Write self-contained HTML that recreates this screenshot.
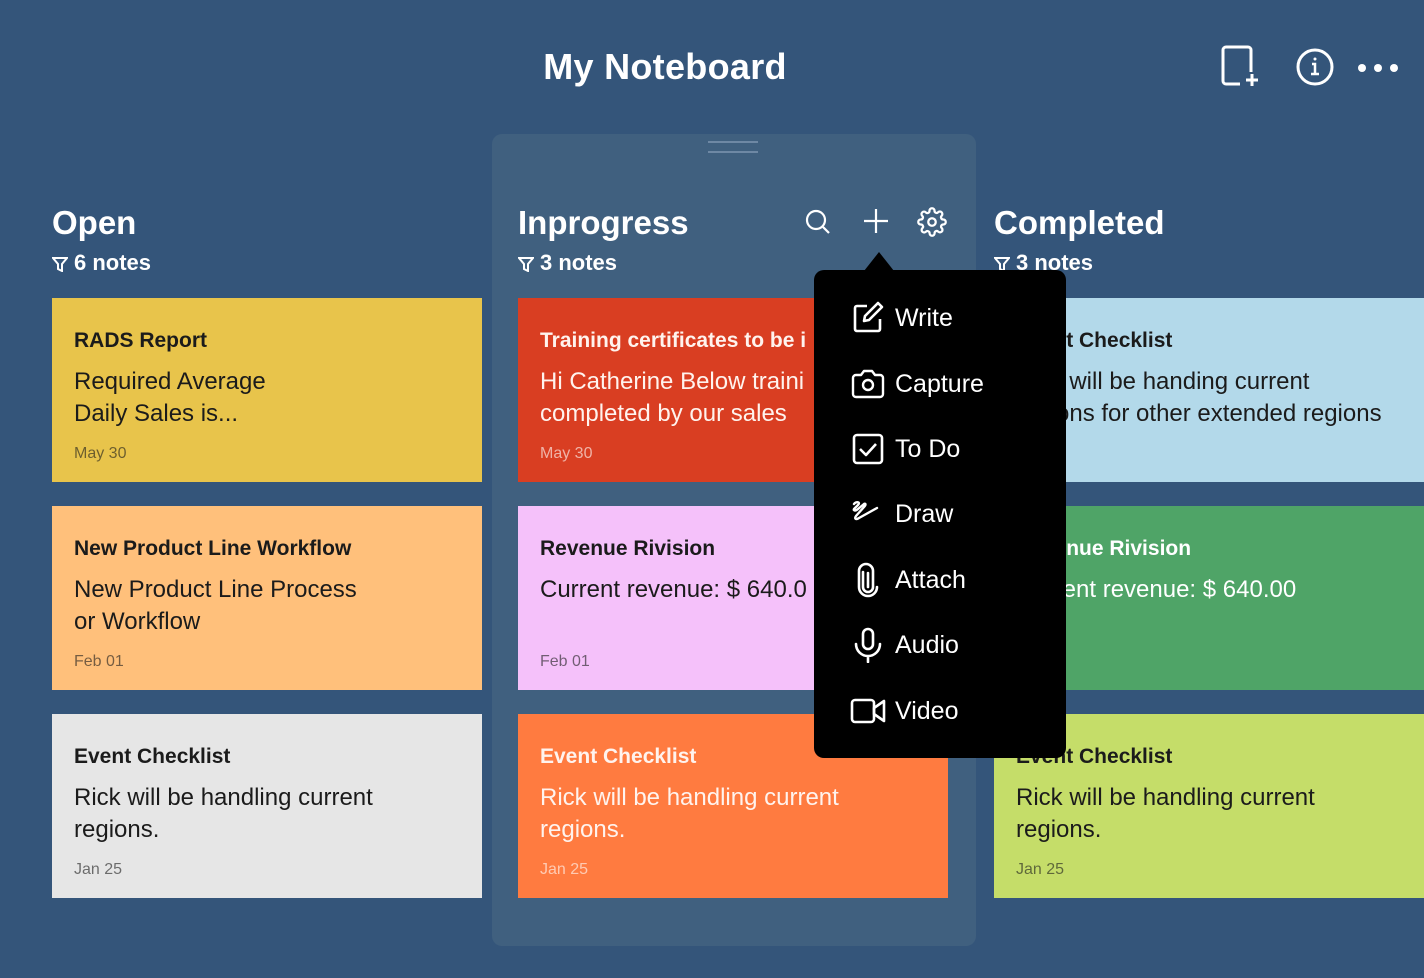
<!DOCTYPE html>
<html><head><meta charset="utf-8"><style>
*{margin:0;padding:0;box-sizing:border-box}
body{width:1424px;height:978px;background:#34557a;font-family:"Liberation Sans",sans-serif;position:relative;overflow:hidden;color:#fff}
.abs{position:absolute}
h1{position:absolute;left:0;width:1330px;text-align:center;top:46px;font-size:36px;font-weight:bold;letter-spacing:0.3px}
.panel{position:absolute;left:492px;top:134px;width:484px;height:812px;background:#40607f;border-radius:10px}
.grip{position:absolute;left:708px;width:50px;height:2px;background:#6e88a4}
.colt{position:absolute;top:204px;font-size:33px;font-weight:bold}
.cnt{position:absolute;top:250px;font-size:22px;font-weight:bold}
.cnt svg{vertical-align:-2px;margin-right:6px}
.card{position:absolute;width:430px;height:184px;padding:31px 22px 28px;color:#1b1b1b}
.card .t{font-size:21px;font-weight:bold;height:32px;white-space:nowrap;overflow:hidden}
.card .b{font-size:24px;line-height:32px;margin-top:5px;height:77px;white-space:nowrap}
.card .d{font-size:16px;opacity:.6;margin-top:2px}
.lt{color:#fff}.lt .b,.lt .t{color:#fff3ee}
.menu{position:absolute;left:814px;top:270px;width:252px;height:488px;background:#000;border-radius:10px}
.menu .i{position:absolute;left:36px;font-size:25px;color:#fff;display:flex;align-items:center;gap:9px}
.menu svg{width:36px;height:36px}
</style></head><body>
<h1>My Noteboard</h1>
<svg class="abs" style="left:1220px;top:44px" width="42" height="44" viewBox="0 0 42 44" fill="none" stroke="#fff" stroke-width="3"><path d="M20 40H6a3 3 0 0 1-3-3V6a3 3 0 0 1 3-3h22a3 3 0 0 1 3 3v22"/><path d="M32 30v12M26 36h12"/></svg>
<svg class="abs" style="left:1295px;top:47px" width="40" height="40" viewBox="0 0 40 40" fill="none" stroke="#fff" stroke-width="3"><circle cx="20" cy="20" r="17"/><path d="M17 17h3v10M16 27h8" stroke-width="2.5"/><circle cx="20" cy="12" r="1.5" fill="#fff" stroke="none"/></svg>
<svg class="abs" style="left:1355px;top:60px" width="46" height="16"><circle cx="7" cy="8" r="4" fill="#fff"/><circle cx="23" cy="8" r="4" fill="#fff"/><circle cx="39" cy="8" r="4" fill="#fff"/></svg>
<div class="panel"></div>
<div class="grip" style="top:141px"></div><div class="grip" style="top:151px"></div>

<div class="colt" style="left:52px">Open</div>
<div class="cnt" style="left:52px"><svg width="16" height="16" viewBox="0 0 16 16" fill="none" stroke="#fff" stroke-width="2"><path d="M1 2h14L10 8v7l-4-2V8z"/></svg>6 notes</div>
<div class="colt" style="left:518px">Inprogress</div>
<div class="cnt" style="left:518px"><svg width="16" height="16" viewBox="0 0 16 16" fill="none" stroke="#fff" stroke-width="2"><path d="M1 2h14L10 8v7l-4-2V8z"/></svg>3 notes</div>
<div class="colt" style="left:994px">Completed</div>
<div class="cnt" style="left:994px"><svg width="16" height="16" viewBox="0 0 16 16" fill="none" stroke="#fff" stroke-width="2"><path d="M1 2h14L10 8v7l-4-2V8z"/></svg>3 notes</div>

<svg class="abs" style="left:804px;top:208px" width="28" height="28" viewBox="0 0 28 28" fill="none" stroke="#fff" stroke-width="2.2"><circle cx="12" cy="12" r="9"/><path d="M19 19l6 6"/></svg>
<svg class="abs" style="left:862px;top:207px" width="28" height="28" viewBox="0 0 28 28" fill="none" stroke="#fff" stroke-width="2.2"><path d="M14 2v24M2 14h24"/></svg>
<svg class="abs" style="left:917px;top:207px" width="30" height="30" viewBox="0 0 24 24" fill="none" stroke="#fff" stroke-width="1.8"><circle cx="12" cy="12" r="3"/><path d="M19.4 15a1.65 1.65 0 0 0 .33 1.820l.06.06a2 2 0 1 1-2.830 2.830l-.06-.06a1.65 1.65 0 0 0-1.820-.33 1.65 1.65 0 0 0-1 1.510V21a2 2 0 1 1-4 0v-.09A1.65 1.65 0 0 0 9 19.4a1.65 1.650 0 0 0-1.820.33l-.06.06a2 2 0 1 1-2.830-2.830l.06-.06A1.65 1.65 0 0 0 4.680 15a1.65 1.65 0 0 0-1.510-1H3a2 2 0 1 1 0-4h.09A1.65 1.65 0 0 0 4.600 9a1.65 1.65 0 0 0-.33-1.820l-.06-.06a2 2 0 1 1 2.830-2.830l.06.06A1.65 1.65 0 0 0 9 4.680 1.65 1.65 0 0 0 10 3.170V3a2 2 0 1 1 4 0v.09a1.65 1.65 0 0 0 1 1.510 1.65 1.65 0 0 0 1.820-.33l.06-.06a2 2 0 1 1 2.830 2.830l-.06.06A1.65 1.65 0 0 0 19.4 9a1.65 1.65 0 0 0 1.510 1H21a2 2 0 1 1 0 4h-.09a1.65 1.65 0 0 0-1.510 1z"/></svg>

<div class="card" style="left:52px;top:298px;background:#e8c44b"><div class="t">RADS Report</div><div class="b">Required Average<br>Daily Sales is...</div><div class="d">May 30</div></div>
<div class="card" style="left:52px;top:506px;background:#ffc07b"><div class="t">New Product Line Workflow</div><div class="b">New Product Line Process<br>or Workflow</div><div class="d">Feb 01</div></div>
<div class="card" style="left:52px;top:714px;background:#e6e6e6"><div class="t">Event Checklist</div><div class="b">Rick will be handling current<br>regions.</div><div class="d">Jan 25</div></div>

<div class="card lt" style="left:518px;top:298px;background:#d93e22"><div class="t">Training certificates to be i</div><div class="b">Hi Catherine Below traini<br>completed by our sales</div><div class="d">May 30</div></div>
<div class="card" style="left:518px;top:506px;background:#f5c1fa"><div class="t">Revenue Rivision</div><div class="b">Current revenue: $ 640.0</div><div class="d">Feb 01</div></div>
<div class="card lt" style="left:518px;top:714px;background:#ff7b40"><div class="t">Event Checklist</div><div class="b">Rick will be handling current<br>regions.</div><div class="d">Jan 25</div></div>

<div class="card" style="left:994px;top:298px;background:#b3d9ea"><div class="t">Event Checklist</div><div class="b">Rick will be handing current<br>regions for other extended regions</div><div class="d">Jan 30</div></div>
<div class="card" style="left:994px;top:506px;background:#4fa467;color:#fff"><div class="t">Revenue Rivision</div><div class="b">Current revenue: $ 640.00</div><div class="d"></div></div>
<div class="card" style="left:994px;top:714px;background:#c5dd69"><div class="t">Event Checklist</div><div class="b">Rick will be handling current<br>regions.</div><div class="d">Jan 25</div></div>

<div class="abs" style="left:864px;top:252px;width:0;height:0;border-left:15px solid transparent;border-right:15px solid transparent;border-bottom:19px solid #000"></div>
<div class="menu">
<div class="i" style="top:30px"><svg viewBox="0 0 36 36" fill="none" stroke="#fff" stroke-width="2.6" stroke-linejoin="round"><path d="M17 6H7a2 2 0 0 0-2 2v21a2 2 0 0 0 2 2h21a2 2 0 0 0 2-2V19"/><path d="M28 3l4 4-13 13-5 1 1-5z"/></svg>Write</div>
<div class="i" style="top:96px"><svg viewBox="0 0 36 36" fill="none" stroke="#fff" stroke-width="2.4" stroke-linejoin="round"><path d="M3 12a3 3 0 0 1 3-3h5l3-4h8l3 4h5a3 3 0 0 1 3 3v16a3 3 0 0 1-3 3H6a3 3 0 0 1-3-3z"/><circle cx="18" cy="19" r="5"/></svg>Capture</div>
<div class="i" style="top:161px"><svg viewBox="0 0 36 36" fill="none" stroke="#fff" stroke-width="2.6" stroke-linejoin="round"><rect x="4" y="4" width="28" height="28" rx="3"/><path d="M10 18l6 6 10-11"/></svg>To Do</div>
<div class="i" style="top:226px"><svg viewBox="0 0 36 36" fill="none" stroke="#fff" stroke-width="2.4" stroke-linecap="round" stroke-linejoin="round"><path d="M4 8c2-3 7-2 4 1l-4 4c-1 2 2 2 4 0l6-5c2-1 2 1 0 3l-8 9c-2 3 0 4 3 2l18-10"/></svg>Draw</div>
<div class="i" style="top:292px"><svg viewBox="0 0 36 36" fill="none" stroke="#fff" stroke-width="2.6" stroke-linecap="round"><path d="M13 10v15a5 5 0 0 0 10 0V9a7 7 0 0 0-14 0v16a9 9 0 0 0 18 0"/><path d="M18 11v14"/></svg>Attach</div>
<div class="i" style="top:357px"><svg viewBox="0 0 36 36" fill="none" stroke="#fff" stroke-width="2.6" stroke-linecap="round"><rect x="13" y="2" width="10" height="20" rx="5"/><path d="M6 17a12 12 0 0 0 24 0M18 29v6"/></svg>Audio</div>
<div class="i" style="top:423px"><svg viewBox="0 0 36 36" fill="none" stroke="#fff" stroke-width="2.6" stroke-linejoin="round"><rect x="2" y="7" width="22" height="22" rx="3"/><path d="M24 15l10-7v20l-10-7z"/></svg>Video</div>
</div>
</body></html>
